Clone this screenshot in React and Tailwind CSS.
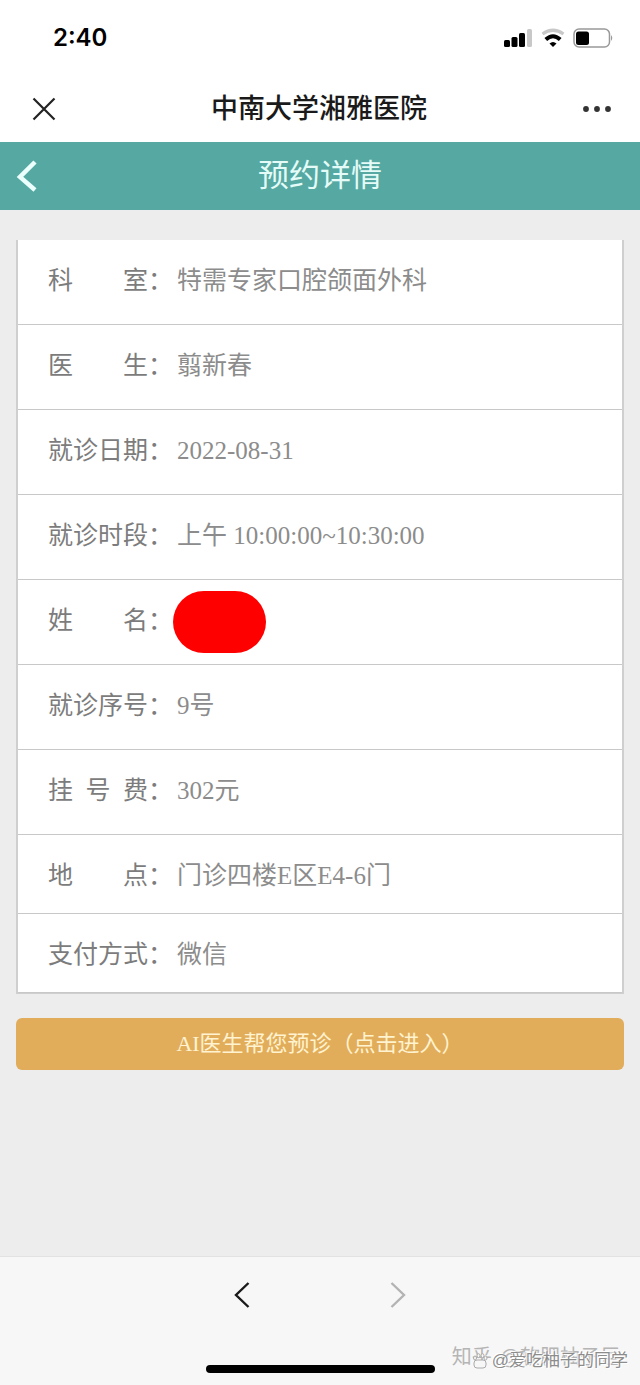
import React from "react";

const details = [
  { label: "科室", value: "特需专家口腔颌面外科" },
  { label: "医生", value: "翦新春" },
  { label: "就诊日期", value: "2022-08-31" },
  { label: "就诊时段", value: "上午 10:00:00~10:30:00" },
  { label: "姓名", hidden: true },
  { label: "就诊序号", value: "9号" },
  { label: "挂号费", value: "302元" },
  { label: "地点", value: "门诊四楼E区E4-6门", compact: true },
  { label: "支付方式", value: "微信", compact: true },
];

function StatusBar() {
  return (
    <div className="flex h-[76px] items-center justify-between pl-[53px] pr-[26px]">
      <span className="font-['Inter','Noto_Sans_CJK_SC',sans-serif] text-2xl leading-8 font-semibold text-black">
        2:40
      </span>
      <div className="flex items-center gap-2">
        {/* Signal */}
        <svg width="30" height="20" viewBox="0 0 30 20">
          <rect x="1" y="12" width="6" height="7" rx="1.5" />
          <rect x="8.5" y="9" width="6" height="10" rx="1.5" />
          <rect x="16" y="5" width="6" height="14" rx="1.5" />
          <rect x="24" y="1" width="5" height="18" rx="1.5" fill="#c8c8c8" />
        </svg>
        {/* Wifi */}
        <svg width="24" height="20" viewBox="0 0 24 20" fill="none">
          <path d="M1.5 6Q12-1.500 22.500 6" stroke="#c8c8c8" strokeWidth="3.2" />
          <path d="M4.800 11.500Q12 5 19.200 11.500" stroke="#000" strokeWidth="4" />
          <path d="M8.500 15.500Q12 12.500 15.500 15.500L12 19Z" fill="#000" />
        </svg>
        {/* Battery */}
        <svg width="41" height="20" viewBox="0 0 41 20" fill="none">
          <rect x="1" y="1" width="35.5" height="18" rx="5" stroke="#999" strokeWidth="1.5" />
          <rect x="3" y="3.5" width="13" height="13.5" rx="2.5" fill="#000" />
          <path d="M38 7v6q2.500-3 0-6Z" fill="#999" />
        </svg>
      </div>
    </div>
  );
}

function TitleBar() {
  return (
    <div className="flex h-[66px] items-center justify-between pl-8 pr-7">
      <button aria-label="关闭" className="text-[#222]">
        <svg width="24" height="24" viewBox="0 0 24 24" fill="none">
          <path d="M1.500 1.500l21 21M22.500 1.500l-21 21" stroke="currentColor" strokeWidth="2.2" />
        </svg>
      </button>
      <h1 className="text-[27px] leading-9 font-medium text-[#1a1a1a]">中南大学湘雅医院</h1>
      <button aria-label="更多" className="text-[#333]">
        <svg width="30" height="24" viewBox="0 0 30 24" fill="currentColor">
          <circle cx="4" cy="12" r="2.9" />
          <circle cx="15" cy="12" r="2.9" />
          <circle cx="26" cy="12" r="2.9" />
        </svg>
      </button>
    </div>
  );
}

function DetailRow({ label, value, hidden, compact }) {
  return (
    <div
      className={`flex gap-1 border-b border-[#c8c8c8] pt-[23px] pl-[30px] ${
        compact ? "pb-[19px]" : "pb-[25px]"
      }`}
    >
      <dt className="flex text-[#7c7c7c]">
        <span className="flex w-[100px] justify-between">
          {label.length === 4
            ? label
            : label.split("").map((char) => <span key={char}>{char}</span>)}
        </span>
        ：
      </dt>
      <dd className="relative text-[#8c8c8c]">
        {value}
        {hidden && (
          <span className="absolute -top-3 -left-1 h-[62px] w-[93px] rounded-full bg-[#fe0000]" />
        )}
      </dd>
    </div>
  );
}

function BottomBar() {
  return (
    <footer className="relative flex h-[129px] flex-col items-center justify-between border-t border-[#e2e2e2] bg-[#f7f7f7] pt-6 pb-3">
      <nav className="flex gap-[140px]">
        <button aria-label="后退" className="text-[#1a1a1a]">
          <svg width="16" height="28" viewBox="0 0 16 28" fill="none">
            <path d="M14.500 2L2 14l12.500 12" stroke="currentColor" strokeWidth="2.4" />
          </svg>
        </button>
        <button aria-label="前进" className="text-[#b3b3b3]">
          <svg width="16" height="28" viewBox="0 0 16 28" fill="none">
            <path d="M1.500 2L14 14L1.500 26" stroke="currentColor" strokeWidth="2.4" />
          </svg>
        </button>
      </nav>
      <div className="h-2 w-[229px] rounded-full bg-black" />

      {/* Watermarks */}
      <div className="absolute right-5 bottom-4 flex items-center gap-2 text-[#b5b5b5]">
        <span className="text-xl leading-6">知乎</span>
        <span className="text-xl leading-6">@软肥柚子巨</span>
      </div>
      <div className="absolute right-3 bottom-3 flex items-center gap-1 text-[#8c8c8c]">
        <svg width="16" height="16" viewBox="0 0 16 16" fill="#f7f7f7" stroke="#aaa">
          <rect x="2" y="7" width="12" height="8" rx="3" />
          <ellipse cx="3" cy="5" rx="1.5" ry="2" />
          <ellipse cx="6.5" cy="2.7" rx="1.5" ry="2" />
          <ellipse cx="10.5" cy="2.7" rx="1.5" ry="2" />
          <ellipse cx="13.5" cy="5" rx="1.5" ry="2" />
        </svg>
        <span className="text-[17px] leading-6 [text-shadow:1px_1px_0_#fff,-1px_-1px_0_#fff]">
          @爱吃柚子的同学
        </span>
      </div>
    </footer>
  );
}

function App() {
  return (
    <div className="flex min-h-screen flex-col bg-[#ededed] font-['Liberation_Sans','Noto_Sans_CJK_SC',sans-serif]">
      <div className="bg-white">
        <StatusBar />
        <TitleBar />
      </div>

      <header className="relative flex h-[68px] items-center justify-center bg-[#55a9a2]">
        <button aria-label="返回" className="absolute left-4 text-[#ecfffc]">
          <svg width="22" height="34" viewBox="0 0 22 34" fill="none">
            <path d="M19 3L4 18l15 13" stroke="currentColor" strokeWidth="4.5" />
          </svg>
        </button>
        <h2 className="text-[31px] leading-10 text-[#e4fbf8]">预约详情</h2>
      </header>

      <main className="flex-1 px-4 pt-[30px] font-['Liberation_Serif','Noto_Sans_CJK_SC',serif]">
        <dl className="border-x-2 border-b border-[#cfcfcf] bg-white text-[25px] leading-9">
          {details.map((row) => (
            <DetailRow key={row.label} {...row} />
          ))}
        </dl>
        <button className="mt-6 h-[52px] w-full rounded-md bg-[#e2ad5b] text-[22px] leading-8 text-[#fff3d0]">
          AI医生帮您预诊（点击进入）
        </button>
      </main>

      <BottomBar />
    </div>
  );
}

export default App;
